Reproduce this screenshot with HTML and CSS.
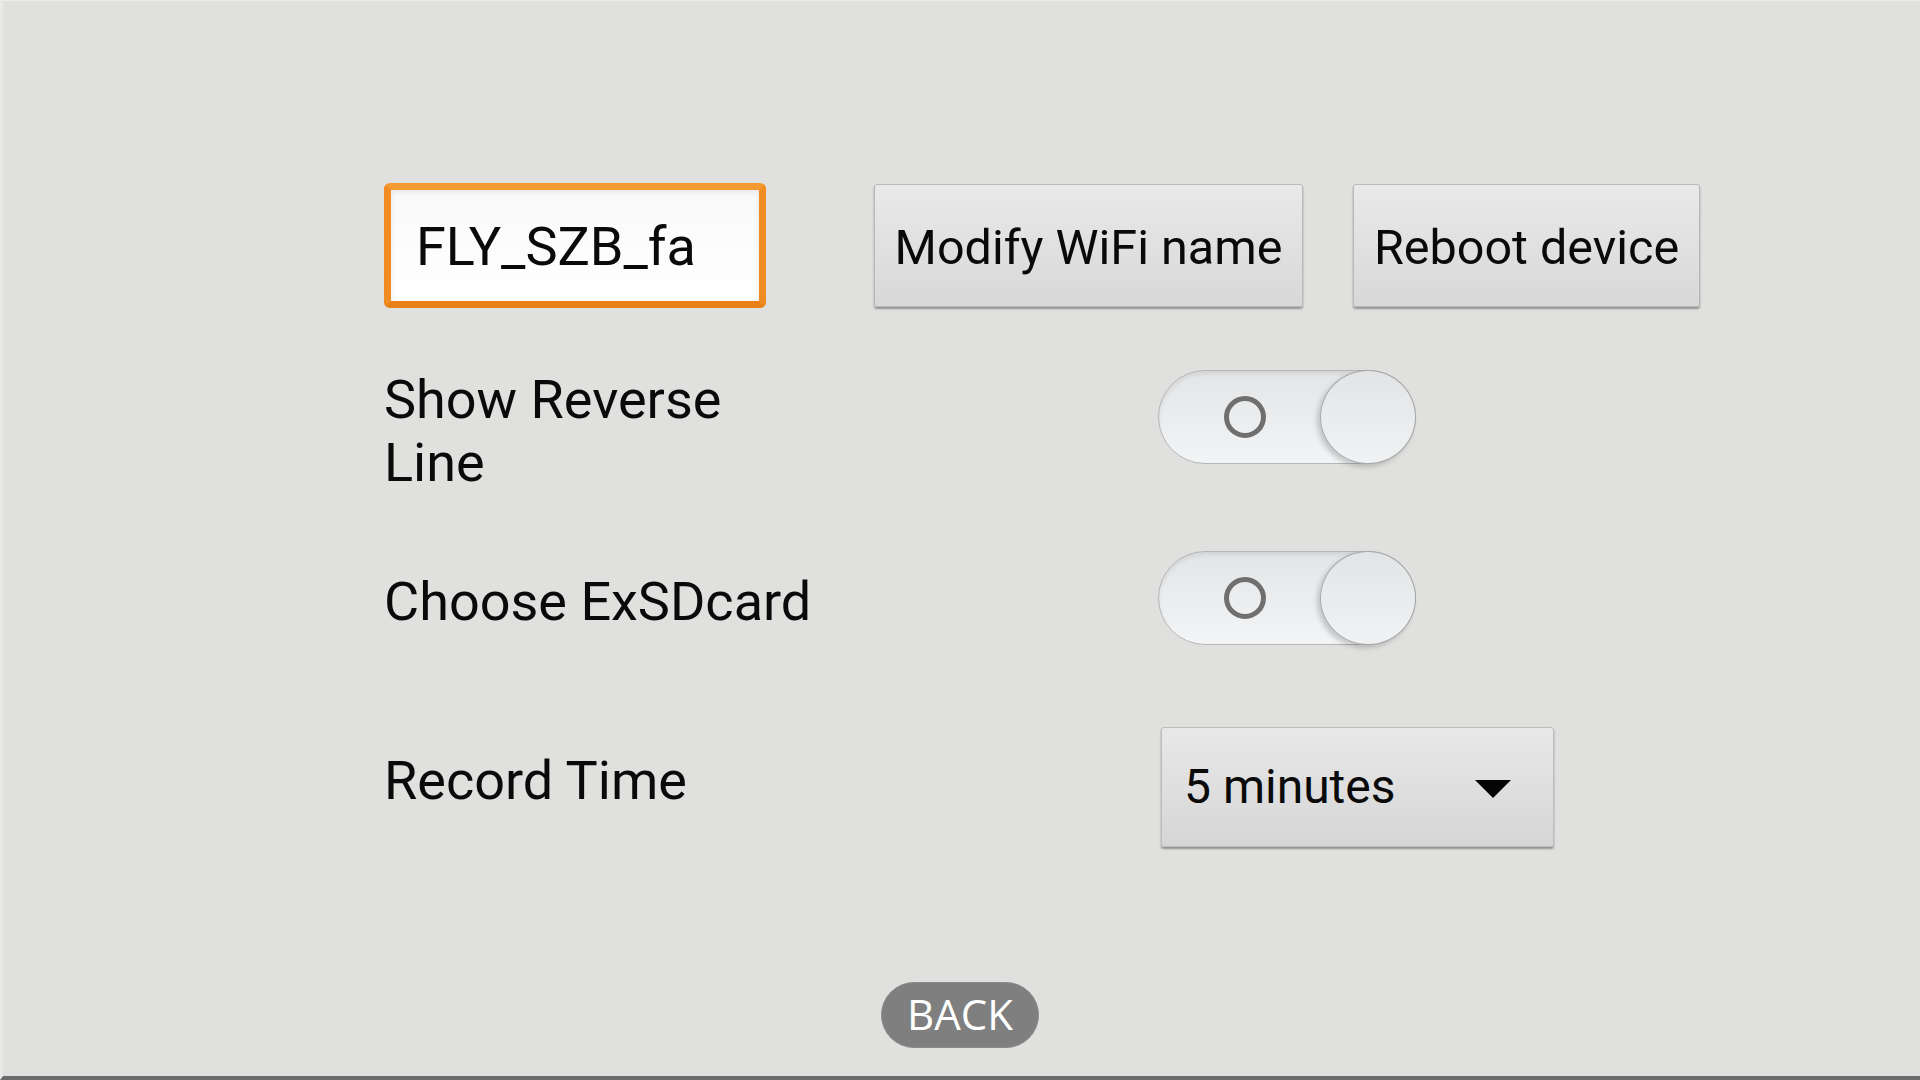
FILE: index.html
```html
<!DOCTYPE html>
<html lang="en">
<head>
<meta charset="utf-8">
<title>Settings</title>
<link rel="stylesheet" href="styles.css">
</head>
<body>
<div class="page">
  <div class="content">
    <div class="row-top">
      <div class="name-input">FLY_SZB_fa</div>
      <button class="btn btn-modify">Modify WiFi name</button>
      <button class="btn btn-reboot">Reboot device</button>
    </div>
    <div class="row row-reverse">
      <div class="label">Show Reverse<br>Line</div>
      <div class="toggle"><span class="ring"></span><span class="knob"></span></div>
    </div>
    <div class="row row-sd">
      <div class="label">Choose ExSDcard</div>
      <div class="toggle"><span class="ring"></span><span class="knob"></span></div>
    </div>
    <div class="row row-record">
      <div class="label">Record Time</div>
      <div class="select"><span class="select-text">5 minutes</span><span class="caret"></span></div>
    </div>
  </div>
  <div class="back-wrap"><button class="back">BACK</button></div>
</div>
</body>
</html>
```
FILE: styles.css
```css
html, body {
  margin: 0;
  padding: 0;
  background: #e0e0de;
}
.page {
  width: 1920px;
  height: 1080px;
  box-sizing: border-box;
  border-top: 1px solid #ececea;
  border-left: 3px solid #e9e9e7;
  border-bottom: 4px solid #6b6b6b;
  font-family: Roboto, "Noto Sans", sans-serif;
  color: #0a0a0a;
  display: flex;
  flex-direction: column;
}
.content {
  padding-left: 381px;
  padding-top: 182px;
}
.row-top {
  display: flex;
  align-items: flex-start;
}
.name-input {
  width: 382px;
  height: 125px;
  box-sizing: border-box;
  border: 7px solid #f08c22;
  border-top-color: #f39a30;
  border-bottom-color: #ea8118;
  border-radius: 6px;
  background: linear-gradient(#f9f9f9, #ffffff);
  box-shadow: inset 0 2px 6px rgba(0,0,0,0.08);
  font-size: 54px;
  line-height: 1;
  padding: 30px 0 0 25px;
}
.btn {
  height: 123px;
  margin-top: 1px;
  box-sizing: border-box;
  border: 1px solid #b9b9b9;
  border-radius: 3px;
  background: linear-gradient(#e9e9e9, #d8d8d8);
  box-shadow: 0 2px 2px rgba(0,0,0,0.35);
  font-family: Roboto, "Noto Sans", sans-serif;
  font-size: 48.5px;
  color: #0a0a0a;
  padding: 3px 0 0 0;
  text-align: center;
}
.btn-modify {
  width: 429px;
  margin-left: 108px;
}
.btn-reboot {
  width: 347px;
  margin-left: 50px;
}
.row {
  display: flex;
}
.label {
  width: 774px;
  font-size: 54px;
  line-height: 63px;
}
.row-reverse {
  margin-top: 60px;
  align-items: flex-start;
}
.row-reverse .toggle {
  margin-top: 2px;
}
.row-sd {
  margin-top: 57px;
  align-items: center;
}
.row-sd .label {
  margin-top: 6px;
}
.row-record {
  margin-top: 82px;
  align-items: flex-start;
}
.row-record .label {
  margin-top: 22px;
}
.toggle {
  width: 258px;
  height: 94px;
  box-sizing: border-box;
  border-radius: 47px;
  border: 1px solid #b4b6b8;
  background: linear-gradient(#e3e5e7, #f3f4f5);
  box-shadow: inset 0 3px 4px rgba(0,0,0,0.08);
  display: flex;
  align-items: center;
}
.ring {
  width: 42px;
  height: 42px;
  box-sizing: border-box;
  border: 5px solid #6f6f6f;
  border-radius: 50%;
  margin-left: 65px;
}
.knob {
  width: 96px;
  height: 94px;
  box-sizing: border-box;
  margin-left: auto;
  margin-right: -1px;
  border-radius: 50%;
  border: 1px solid #a6a8aa;
  background: linear-gradient(#e2e4e6, #f1f2f3);
  box-shadow: -3px 3px 5px rgba(0,0,0,0.18);
}
.select {
  width: 393px;
  height: 120px;
  margin-left: 3px;
  box-sizing: border-box;
  border: 1px solid #bdbdbd;
  border-radius: 3px;
  background: linear-gradient(#e8e8e8, #d6d6d6);
  box-shadow: 0 2px 2px rgba(0,0,0,0.35);
  display: flex;
  align-items: center;
  padding: 0 42px 0 22px;
}
.select-text {
  font-size: 48px;
  flex: 1;
  padding-bottom: 2px;
}
.caret {
  width: 0;
  height: 0;
  border-left: 18px solid transparent;
  border-right: 18px solid transparent;
  border-top: 18px solid #050505;
  margin-top: 4px;
}
.back-wrap {
  display: flex;
  justify-content: center;
  margin-top: 135px;
  padding-right: 3px;
}
.back {
  width: 158px;
  height: 66px;
  border: 1px solid #8a8a8a;
  border-radius: 33px;
  background: #7f7f7f;
  color: #ffffff;
  font-family: "Open Sans", sans-serif;
  font-size: 42px;
  line-height: 1;
  padding: 0 0 2px 0;
}
```
